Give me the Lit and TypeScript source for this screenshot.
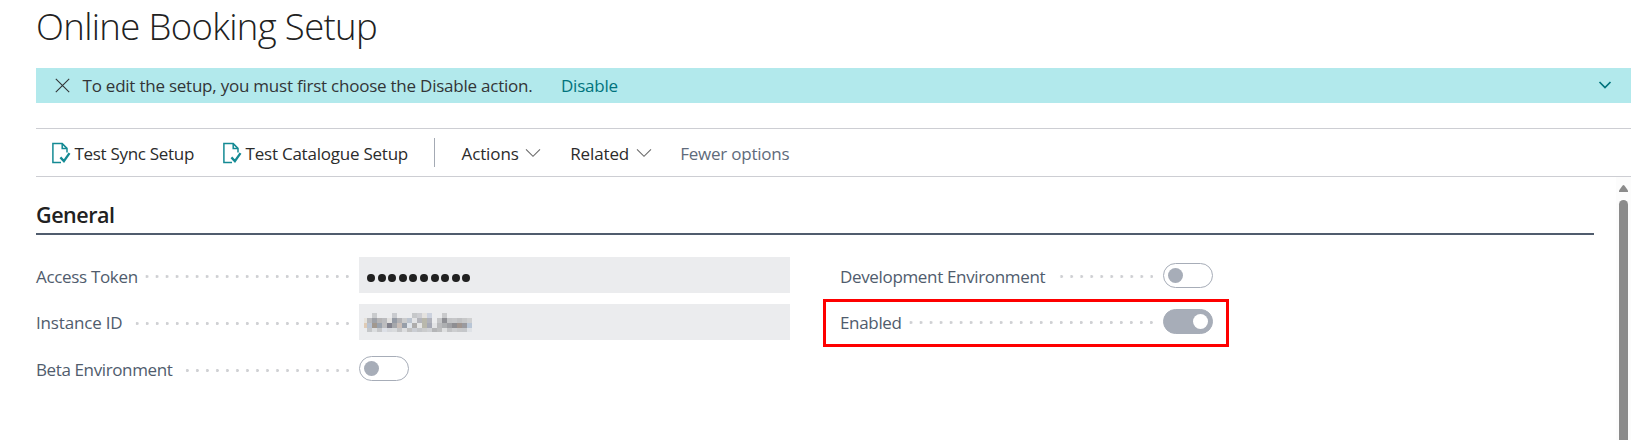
import { LitElement, html, css, svg } from "lit";
import { customElement, property } from "lit/decorators.js";
import { classMap } from "lit/directives/class-map.js";

@customElement("bc-toggle")
class BcToggle extends LitElement {
  @property({ type: Boolean }) on = false;
  static styles = css`
    :host { display: block; flex: none; }
    .track { box-sizing: border-box; width: 50px; height: 25px; border: 1px solid #a7adb8; border-radius: 13px; padding: 0 4px; display: flex; align-items: center; background: #fff; }
    .knob { width: 15px; height: 15px; border-radius: 50%; background: #a7adb8; }
    .on { background: #a7adb8; justify-content: flex-end; }
    .on .knob { background: #fff; }
  `;
  render() {
    return html`<div class=${classMap({ track: true, on: this.on })}><div class="knob"></div></div>`;
  }
}

const MOSAIC: string[][] = [
  ["", "", "c9cbcd", "", "", "", "c9cbcf", "", "", "", "c6c8ca", "cdced2", "e4e2df", "ccd2de", "", "", "c9cacc", "", "", "", "", ""],
  ["e6e3dd", "b9babd", "9fa2a8", "b6b5b6", "bbbcbf", "e1e0df", "969ca6", "b2b2b5", "cbcccd", "bcc4cf", "e3e4e6", "b4b5bb", "b9b8ac", "b0b2bb", "", "c5c6c8", "8f9095", "c3c4c6", "c6c7c9", "bfc0c2", "c7c8c9", "cfd0d1"],
  ["dfcbb6", "b9c3d2", "a1988f", "9ba3ae", "bdbdbf", "82828d", "a5a7ab", "c9beb8", "969ea9", "dfe4ea", "aeadac", "e4e5e5", "b9b8ac", "a6a9b5", "e3e4e6", "b9babc", "adafb1", "9fa0a4", "8e8e92", "a0958f", "9a9a9f", "b9c6d6"],
  ["", "c5c7c9", "dcdee0", "c6c7c9", "dde0e7", "d6d8dc", "d9dbdd", "c5c6c8", "dddee0", "c2c2c2", "cbced4", "c4c6c9", "cbcccd", "cfd1d4", "b4b5b7", "bdbebf", "dfe0e1", "c2c3c5", "cdced0", "c7c8ca", "c5c7ca", "dfe2e6"],
];

const docCheck = html`<svg class="doc" width="20" height="22" viewBox="0 0 20 22" fill="none">
  <path d="M10 20.4H1.9V1.6h9.3L16 6.4V10.5" stroke="#148a94" stroke-width="1.5" />
  <path d="M11.2 1.8v4.6H16" stroke="#148a94" stroke-width="1.5" />
  <path d="M9.4 15.4l3.5 3.7 5.6-8" stroke="#148a94" stroke-width="2.3" />
</svg>`;

const chevron = html`<svg class="chev" width="16" height="10" viewBox="0 0 16 10" fill="none">
  <path d="M1 1.3l7 7 7-7" stroke="#6b6b6b" stroke-width="1.1" />
</svg>`;

@customElement("app-root")
class AppRoot extends LitElement {
  static styles = css`
    :host { display: block; height: 440px; overflow: hidden; background: #fff; font-family: "Open Sans", "Noto Sans", sans-serif; font-size: 17px; letter-spacing: -0.23px; color: #2b2b2b; white-space: nowrap; }
    .page { height: 440px; padding: 0 7px 0 36px; display: flex; flex-direction: column; box-sizing: border-box; }
    h1 { margin: 0; height: 68px; line-height: 53px; font-size: 36.5px; letter-spacing: -0.65px; font-weight: 300; color: #212121; flex: none; }
    .banner { height: 35px; flex: none; background: #b2e9ec; display: flex; align-items: center; padding: 0 19px 0 19px; color: #323537; }
    .banner .x { margin-right: 12.5px; }
    .link { color: #00737c; margin-left: 28.5px; flex: 1; }
    .bar { margin-top: 25px; height: 49px; box-sizing: border-box; flex: none; border: solid #cdced3; border-width: 1px 0; display: flex; align-items: center; padding-left: 15px; }
    .item { display: flex; align-items: center; }
    .item span { padding-top: 2px; }
    .g1 { margin-left: 28px; }
    .g2 { margin-left: 29px; }
    .g3 { margin-left: 28.5px; }
    .t-sync { letter-spacing: -0.3px; }
    .t-act, .t-rel { letter-spacing: -0.12px; }
    .t-few { letter-spacing: -0.22px; color: #5f6b7b; }
    .doc { margin-right: 3.5px; }
    .chev { margin-left: 6.5px; }
    .sep { width: 1px; height: 29px; background: #a4aab4; margin: 0 26.5px 0 26px; }
    .body { flex: 1; display: flex; min-height: 0; }
    .content { width: 1558px; flex: none; }
    h2 { margin: 0; height: 58px; box-sizing: border-box; border-bottom: 2px solid #505c6d; font-size: 21.5px; letter-spacing: -0.46px; font-weight: 600; line-height: 75px; color: #212121; }
    .cols { display: flex; padding-top: 22px; }
    .left { width: 804px; flex: none; display: flex; flex-direction: column; gap: 11px; }
    .left bc-toggle { margin-bottom: 1px; }
    .right { width: 435px; }
    .row { height: 36px; display: flex; align-items: center; color: #505c6d; letter-spacing: -0.33px; }
    .cell { width: 323px; display: flex; align-items: center; padding-top: 2px; }
    .t-ins, .t-beta { margin-top: -2px; }
    .t-ins { letter-spacing: -0.17px; }
    .t-beta { letter-spacing: -0.38px; }
    .t-dev { letter-spacing: -0.34px; padding-right: 2px; }
    .leader { flex: 1; height: 3px; margin: 1px 10px 0 7.5px; background: radial-gradient(circle at 8.5px 1.5px, #cfd0d3 1.2px, transparent 1.7px) right 0 top 0 / 10.03px 3px repeat-x; }
    .input { width: 431px; height: 36px; background: #ebecee; box-sizing: border-box; padding-left: 8px; display: flex; align-items: center; }
    .pw { display: flex; gap: 2.6px; padding-top: 6px; }
    .pw i { width: 8px; height: 8.5px; border-radius: 50%; background: #212121; }
    .mosaic { display: grid; grid-template-columns: 3px repeat(21, 5px); grid-template-rows: 5px 5px 5px 4px; margin-left: -3px; }
    .frame { box-sizing: border-box; width: 406px; height: 48px; border: 3px solid #fe0000; margin: 6px 0 0 -17px; padding: 1px 0 5px 14px; }
    .scroll { margin-left: 22px; width: 15px; background: #fcfcfc; display: flex; flex-direction: column; align-items: center; }
    .thumb { width: 9px; flex: 1; background: #8b8b8b; border-radius: 5px 5px 0 0; margin-top: 8px; }
    .up { margin-top: 8px; flex: none; }
  `;

  private field(label: string, cls: string, control: unknown) {
    return html`<div class="row"><div class="cell"><span class=${cls}>${label}</span><span class="leader"></span></div>${control}</div>`;
  }

  render() {
    return html`<div class="page">
      <h1>Online Booking Setup</h1>
      <div class="banner">
        <svg class="x" width="15" height="15" viewBox="0 0 15 15" fill="none"><path d="M.8.8l13.4 13.4M14.2.8L.8 14.2" stroke="#323537" stroke-width="1.1" /></svg>
        <span class="t-msg">To edit the setup, you must first choose the Disable action.</span>
        <span class="link">Disable</span>
        <svg width="14" height="9" viewBox="0 0 14 9" fill="none"><path d="M1.5 1l5.5 5.6L12.5 1" stroke="#00737c" stroke-width="1.7" /></svg>
      </div>
      <div class="bar">
        <span class="item">${docCheck}<span class="t-sync">Test Sync Setup</span></span>
        <span class="item g1">${docCheck}<span class="t-cat">Test Catalogue Setup</span></span>
        <span class="sep"></span>
        <span class="item"><span class="t-act">Actions</span>${chevron}</span>
        <span class="item g2"><span class="t-rel">Related</span>${chevron}</span>
        <span class="item g3"><span class="t-few">Fewer options</span></span>
      </div>
      <div class="body">
        <div class="content">
          <h2>General</h2>
          <div class="cols">
            <div class="left">
              ${this.field("Access Token", "t-acc", html`<div class="input"><span class="pw">${Array.from({ length: 10 }, () => html`<i></i>`)}</span></div>`)}
              ${this.field("Instance ID", "t-ins", html`<div class="input"><span class="mosaic">${MOSAIC.flat().map((c) => svgCell(c))}</span></div>`)}
              ${this.field("Beta Environment", "t-beta", html`<bc-toggle></bc-toggle>`)}
            </div>
            <div class="right">
              ${this.field("Development Environment", "t-dev", html`<bc-toggle></bc-toggle>`)}
              <div class="frame">${this.field("Enabled", "t-en", html`<bc-toggle on></bc-toggle>`)}</div>
            </div>
          </div>
        </div>
        <div class="scroll">
          <svg class="up" width="9" height="7" viewBox="0 0 9 7"><path d="M3.6.6Q4.5-.4 5.4.6L9 5.6V7H0V5.6z" fill="#8b8b8b" /></svg>
          <div class="thumb"></div>
        </div>
      </div>
    </div>`;
  }
}

function svgCell(c: string) {
  return html`<svg width="100%" height="100%" display="block">${c ? svg`<rect width="5" height="5" fill=${"#" + c} />` : null}</svg>`;
}
